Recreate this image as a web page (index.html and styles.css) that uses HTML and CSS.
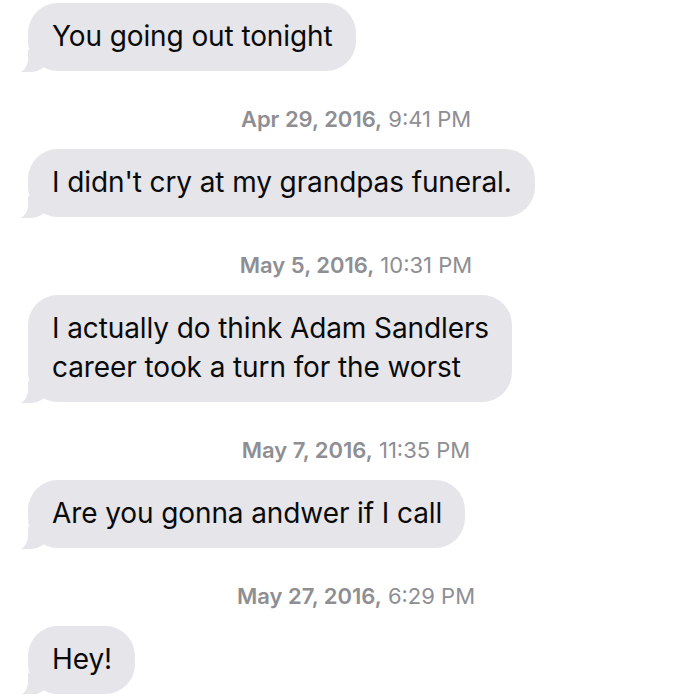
FILE: index.html
```html
<!DOCTYPE html>
<html lang="en">

<head>
  <meta charset="UTF-8">
  <meta name="viewport" content="width=device-width, initial-scale=1.0">
  <title>messages</title>
  <link rel="stylesheet" href="styles.css">
</head>

<body>
  <main class="thread">
    <div class="bubble">You going out tonight</div>

    <p class="stamp"><b>Apr 29, 2016,</b> 9:41 PM</p>
    <div class="bubble">I didn't cry at my grandpas funeral.</div>

    <p class="stamp"><b>May 5, 2016,</b> 10:31 PM</p>
    <div class="bubble">I actually do think Adam Sandlers<br>career took a turn for the worst</div>

    <p class="stamp"><b>May 7, 2016,</b> 11:35 PM</p>
    <div class="bubble">Are you gonna andwer if I call</div>

    <p class="stamp"><b>May 27, 2016,</b> 6:29 PM</p>
    <div class="bubble">Hey!</div>
  </main>
</body>

</html>
```

FILE: styles.css
```css
body {
  margin: 0;
  background: #fff;
  font-family: Inter, "Liberation Sans", sans-serif;
}

.thread {
  display: flex;
  flex-direction: column;
  align-items: flex-start;
  padding: 3px 0 0 28px;
}

.bubble {
  position: relative;
  padding: 14px 23px 15px 24px;
  background: #e5e5ea;
  border-radius: 30px;
  font-size: 28px;
  line-height: 39px;
  letter-spacing: -0.1px;
  color: #0a0a0a;
}

/* little tail at the bottom left */
.bubble::before {
  content: "";
  position: absolute;
  bottom: -1px;
  left: -10px;
  width: 30px;
  height: 22px;
  background: #e5e5ea;
  border-bottom-right-radius: 18px 14px;
}

.bubble::after {
  content: "";
  position: absolute;
  bottom: -2px;
  left: -16px;
  width: 16px;
  height: 26px;
  background: #fff;
  border-bottom-right-radius: 12px 14px;
}

.stamp {
  align-self: stretch;
  margin: 37px 0 19px;
  padding-right: 16px;
  text-align: center;
  font-size: 22px;
  line-height: 22px;
  color: #8e8e93;
}

.stamp b {
  font-weight: 600;
}
```
